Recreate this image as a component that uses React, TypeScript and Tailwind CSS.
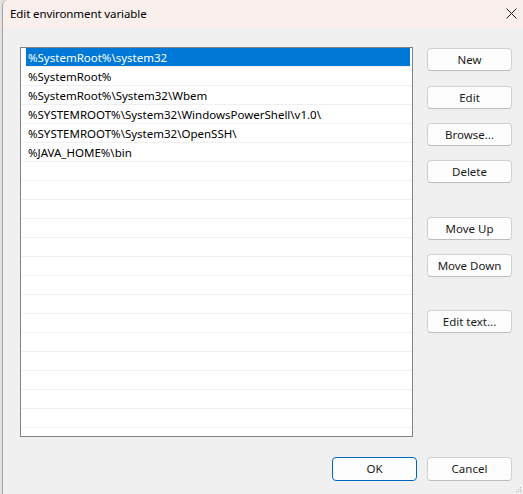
import React from "react";

const paths = [
  "%SystemRoot%\\system32",
  "%SystemRoot%",
  "%SystemRoot%\\System32\\Wbem",
  "%SYSTEMROOT%\\System32\\WindowsPowerShell\\v1.0\\",
  "%SYSTEMROOT%\\System32\\OpenSSH\\",
  "%JAVA_HOME%\\bin",
];

const font = { fontFamily: '"Noto Sans", "Open Sans", sans-serif' };

function Btn({ label, className = "" }: { label: string; className?: string }) {
  return (
    <button
      className={`flex h-[23px] w-[85px] items-center justify-center rounded-[4px] border border-[#d1d1d1] border-b-[#bdbdbd] bg-[#fdfdfd] text-[11.5px] leading-none text-[#1b1b1b] ${className}`}
    >
      {label}
    </button>
  );
}

export default function App() {
  const rows = Array.from({ length: 20 }, (_, i) => paths[i] ?? "");
  return (
    <div className="flex h-[494px] w-[523px] overflow-hidden bg-[#dcdcdc]" style={font}>
      <div className="w-[2px] shrink-0 bg-[#e2e2e2]" />
      <div className="relative flex flex-1 flex-col overflow-hidden rounded-tl-[6px] border-l border-[#a3a3a3]">
        {/* title bar */}
        <div className="flex h-[28px] shrink-0 items-center justify-between bg-[#f9efec] pl-[7px] pr-[6px]">
          <span className="text-[11.5px] tracking-[-0.1px] text-black">Edit environment variable</span>
          <svg width="11" height="11" viewBox="0 0 11 11" className="mt-[-2px]">
            <path d="M0.5 0.5 L10.5 10.5 M10.5 0.5 L0.5 10.5" stroke="#1a1a1a" strokeWidth="1" />
          </svg>
        </div>

        {/* body */}
        <div className="flex flex-1 flex-col bg-[#f0f0f0] pl-[17px] pr-[11px] pt-[19px]">
          <div className="flex">
            <div className="h-[390px] w-[393px] overflow-hidden border border-[#838383] bg-white px-[1px]">
              {rows.map((p, i) => (
                <div key={i} className="flex h-[19px] border-b border-[#efefef]">
                  {i === 0 ? (
                    <div className="ml-[4px] mr-[1px] flex flex-1 items-center bg-[#0078d7] pl-[2px] pt-[1px] text-[11.5px] text-white">
                      {p}
                    </div>
                  ) : (
                    <div className="flex flex-1 items-center pl-[6px] pt-[1px] text-[11.5px] text-black">{p}</div>
                  )}
                </div>
              ))}
            </div>
            <div className="ml-[14px] flex flex-col pt-[1px]">
              <Btn label="New" />
              <Btn label="Edit" className="mt-[15px]" />
              <Btn label="Browse..." className="mt-[14px]" />
              <Btn label="Delete" className="mt-[14px]" />
              <Btn label="Move Up" className="mt-[34px]" />
              <Btn label="Move Down" className="mt-[14px]" />
              <Btn label="Edit text..." className="mt-[33px]" />
            </div>
          </div>
          <div className="mt-[20px] flex justify-end gap-[10px]">
            <button className="flex h-[24px] w-[85px] items-center justify-center rounded-[4px] border border-[#0067c0] bg-[#fdfdfd] text-[11.5px] leading-none text-[#1b1b1b]">
              OK
            </button>
            <Btn label="Cancel" className="h-[24px]" />
          </div>
        </div>

        {/* resize grip */}
        <svg width="7" height="7" viewBox="0 0 7 7" className="absolute bottom-[1px] right-[1px]">
          <rect x="5" y="1" width="1" height="1" fill="#b5b5b5" />
          <rect x="3" y="3" width="1" height="1" fill="#b5b5b5" />
          <rect x="5" y="3" width="1" height="1" fill="#b5b5b5" />
          <rect x="1" y="5" width="1" height="1" fill="#b5b5b5" />
          <rect x="3" y="5" width="1" height="1" fill="#b5b5b5" />
          <rect x="5" y="5" width="1" height="1" fill="#b5b5b5" />
        </svg>
      </div>
    </div>
  );
}
